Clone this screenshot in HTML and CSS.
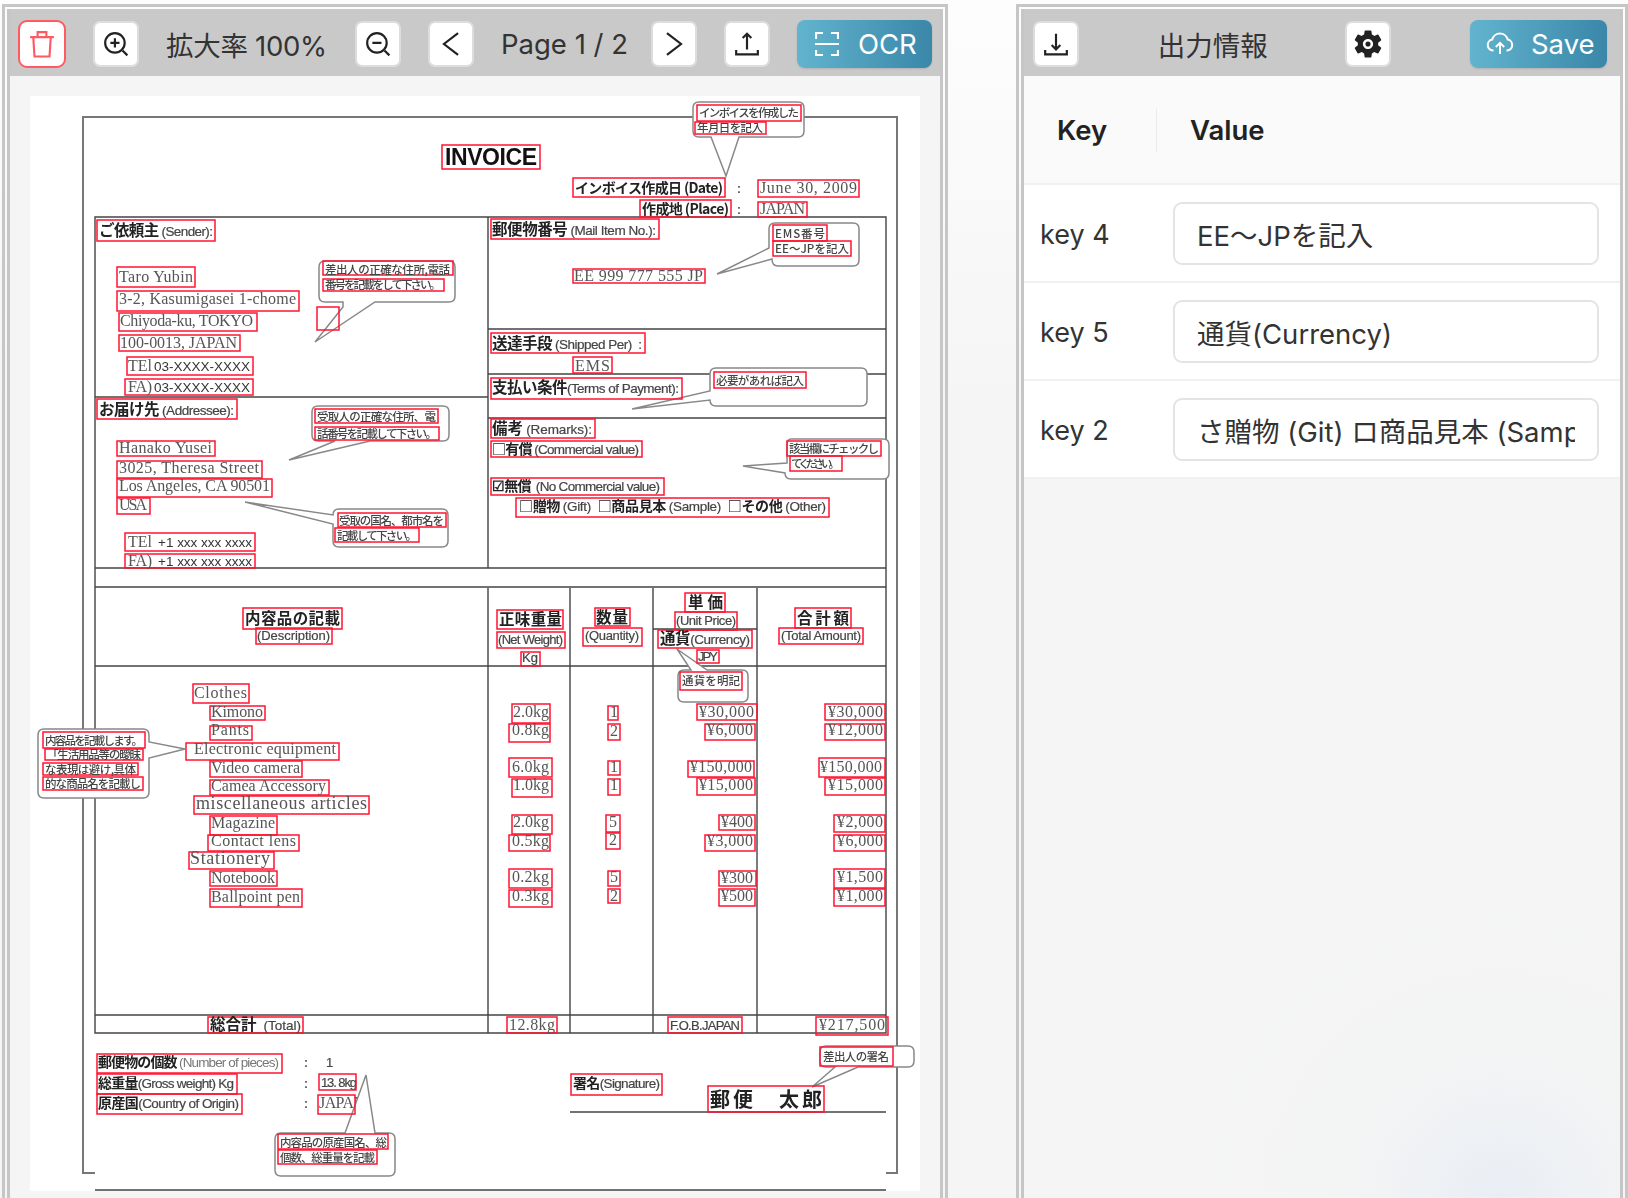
FILE: index.html
```html
<!DOCTYPE html>
<html lang="ja">
<head>
<meta charset="utf-8">
<title>OCR</title>
<link rel="stylesheet" href="styles.css">
</head>
<body>
<div class="app">

<!-- document side -->
<section class="panel panel-doc">
<div class="panel-in">
	<div class="toolbar toolbar-doc">
		<button class="btn btn-danger">
			<svg class="ico" viewBox="0 0 24 24"><path d="M2.500 6.500h19M8.500 6.500v-4h7v4M5 6.500l1 15.500h12l1-15.500"/></svg>
		</button>
		<button class="btn">
			<svg class="ico" viewBox="0 0 24 24"><circle cx="11" cy="11" r="9"/><path d="M18 18l4.500 4.500M11 6.800v8.400M6.800 11h8.400"/></svg>
		</button>
		<span class="bar-text bar-zoom">拡大率 100%</span>
		<button class="btn">
			<svg class="ico" viewBox="0 0 24 24"><circle cx="11" cy="11" r="9"/><path d="M18 18l4.500 4.500M6.800 11h8.400"/></svg>
		</button>
		<button class="btn">
			<svg class="ico" viewBox="0 0 24 24"><path d="M18.500 2L5.500 12l13 10"/></svg>
		</button>
		<span class="bar-text bar-page">Page 1 / 2</span>
		<button class="btn">
			<svg class="ico" viewBox="0 0 24 24"><path d="M5.500 2l13 10-13 10"/></svg>
		</button>
		<button class="btn">
			<svg class="ico" viewBox="0 0 24 24"><path d="M12 17V2.500M8 6.500l4-4 4 4M2 17.500v4h20v-4"/></svg>
		</button>
		<button class="btn-main btn-ocr">
			<svg class="ico ico-main" viewBox="0 0 24 24"><path d="M1 7V1h7M16 1h7v6M23 18v5h-7M8 23H1v-5M0 12h24"/></svg>
			<span>OCR</span>
		</button>
	</div>
	<div class="viewer">
		<div class="sheet">
<svg class="scan" viewBox="30 96 890 1095">
<g class="rules">
	<path class="thick" d="M95 1173H83V117H897V1173H886"/>
	<path d="M95 217H886V1033H95ZM488 217V568M488 588V1033M570 588V1033M653 588V1033M757 588V1033"/>
	<path d="M95 397H488M488 329H886M488 374H886M488 418H886M95 568H886M95 587H886M95 666H886M653 629H757M95 1015H886M95 1190H886M570 1112H886"/>
</g>
<g class="marks">
	<text class="en-s" x="321" y="1087" textLength="36">13. 8kg</text>
	<text class="ser" x="319" y="1108" textLength="46">JAPAN</text>
</g>
<g class="callouts">
	<path d="M699 102H798Q804 102 804 108V131Q804 137 798 137H739L726 176 711 137H699Q693 137 693 131V108Q693 102 699 102Z"/>
	<path d="M325 261H449Q455 261 455 267V296Q455 302 449 302H375L315 342 343 307V302H325Q319 302 319 296V267Q319 261 325 261Z"/>
	<path d="M318 406H443Q449 406 449 412V435Q449 441 443 441H370L289 460 335 441H318Q312 441 312 435V412Q312 406 318 406Z"/>
	<path d="M339 509H442Q448 509 448 515V541Q448 547 442 547H339Q333 547 333 541V524L245 502 333 515Q333 509 339 509Z"/>
	<path d="M775 223H853Q859 223 859 229V260Q859 266 853 266H778Q772 266 772 259L717 274 769 248V229Q769 223 775 223Z"/>
	<path d="M716 368H861Q867 368 867 374V400Q867 406 861 406H716Q710 406 710 400L632 409 710 391V374Q710 368 716 368Z"/>
	<path d="M791 439H883Q889 439 889 445V473Q889 479 883 479H791Q785 479 785 473L743 466 787 463V445Q787 439 791 439Z"/>
	<path d="M44 729H143Q149 729 149 735V742L185 749 149 758V792Q149 798 143 798H44Q38 798 38 792V735Q38 729 44 729Z"/>
	<path d="M684 670H691L677 649 707 670H742Q748 670 748 676V696Q748 702 742 702H684Q678 702 678 696V676Q678 670 684 670Z"/>
	<path d="M281 1133H345L366 1075 375 1133H389Q395 1133 395 1139V1170Q395 1176 389 1176H281Q275 1176 275 1170V1139Q275 1133 281 1133Z"/>
	<path d="M826 1046H908Q914 1046 914 1052V1061Q914 1067 908 1067H858L812 1087 835 1067H826Q820 1067 820 1061V1052Q820 1046 826 1046Z"/>
</g>
<g class="marks">
	<rect x="442" y="145" width="98" height="24"/><text class="b22" x="445" y="165" textLength="92">INVOICE</text>
	<rect x="573" y="178" width="152" height="19"/><text class="lab" x="575" y="193" textLength="148">インボイス作成日 (Date)</text>
	<text class="tiny" x="737" y="193">:</text>
	<rect x="758" y="180" width="101" height="17"/><text class="ser" x="760" y="193" textLength="97">June 30, 2009</text>
	<rect x="640" y="200" width="91" height="17"/><text class="lab" x="642" y="214" textLength="87">作成地 (Place)</text>
	<text class="tiny" x="737" y="214">:</text>
	<rect x="758" y="202" width="49" height="15"/><text class="ser" x="760" y="214" textLength="45">JAPAN</text>
	<rect x="697" y="105" width="104" height="16"/><text class="note" x="699" y="117" textLength="100">インボイスを作成した</text>
	<rect x="695" y="122" width="71" height="12"/><text class="note" x="697" y="132" textLength="66">年月日を記入</text>

	<rect x="97" y="220" width="118" height="21"/><text class="lab lab-l" x="99" y="236" textLength="114">ご依頼主 <tspan class="en">(Sender):</tspan></text>
	<rect x="117" y="267" width="78" height="20"/><text class="ser" x="119" y="282" textLength="74">Taro Yubin</text>
	<rect x="117" y="291" width="182" height="20"/><text class="ser" x="119" y="304" textLength="177">3-2, Kasumigasei 1-chome</text>
	<rect x="119" y="313" width="138" height="18"/><text class="ser" x="120" y="326" textLength="133">Chiyoda-ku, TOKYO</text>
	<rect x="119" y="335" width="121" height="16"/><text class="ser" x="120" y="348" textLength="117">100-0013, JAPAN</text>
	<rect x="127" y="357" width="126" height="18"/><text class="ser" x="128" y="371" textLength="24">TEl</text><text class="en-m" x="154" y="371" textLength="96">03-XXXX-XXXX</text>
	<rect x="125" y="379" width="128" height="16"/><text class="ser" x="128" y="392" textLength="24">FA)</text><text class="en-m" x="154" y="392" textLength="96">03-XXXX-XXXX</text>
	<rect x="323" y="261" width="130" height="14"/><text class="note" x="325" y="274" textLength="125">差出人の正確な住所,電話</text>
	<rect x="323" y="279" width="121" height="12"/><text class="note" x="325" y="289" textLength="116">番号を記載をして下さい。</text>
	<rect x="317" y="307" width="22" height="23"/>

	<rect x="97" y="399" width="140" height="20"/><text class="lab lab-l" x="99" y="415" textLength="135">お届け先 <tspan class="en">(Addressee):</tspan></text>
	<rect x="117" y="441" width="98" height="15"/><text class="ser" x="119" y="453" textLength="93">Hanako Yusei</text>
	<rect x="117" y="461" width="145" height="17"/><text class="ser" x="119" y="473" textLength="140">3025, Theresa Street</text>
	<rect x="117" y="479" width="155" height="18"/><text class="ser" x="119" y="491" textLength="151">Los Angeles, CA 90501</text>
	<rect x="117" y="498" width="33" height="16"/><text class="ser" x="119" y="510" textLength="28">USA</text>
	<rect x="125" y="533" width="130" height="18"/><text class="ser" x="128" y="547" textLength="24">TEl</text><text class="en-m" x="158" y="547" textLength="94">+1 xxx xxx xxxx</text>
	<rect x="125" y="554" width="130" height="14"/><text class="ser" x="128" y="566" textLength="24">FA)</text><text class="en-m" x="158" y="566" textLength="94">+1 xxx xxx xxxx</text>
	<rect x="315" y="409" width="123" height="14"/><text class="note" x="317" y="421" textLength="119">受取人の正確な住所、電</text>
	<rect x="315" y="427" width="124" height="13"/><text class="note" x="317" y="438" textLength="120">話番号を記載して下さい。</text>
	<rect x="338" y="513" width="108" height="14"/><text class="note" x="339" y="525" textLength="105">受取の国名、都市名を</text>
	<rect x="335" y="528" width="84" height="14"/><text class="note" x="337" y="540" textLength="80">記載して下さい。</text>

	<rect x="491" y="219" width="168" height="20"/><text class="lab lab-l" x="492" y="235" textLength="164">郵便物番号 <tspan class="en">(Mail Item No.):</tspan></text>
	<rect x="573" y="269" width="132" height="14"/><text class="ser" x="574" y="281" textLength="129">EE 999 777 555 JP</text>
	<rect x="773" y="225" width="54" height="16"/><text class="note" x="775" y="238" textLength="50">EMS番号</text>
	<rect x="773" y="241" width="78" height="15"/><text class="note" x="775" y="253" textLength="74">EE～JPを記入</text>
	<rect x="491" y="333" width="154" height="20"/><text class="lab lab-l" x="492" y="349" textLength="150">送達手段 <tspan class="en">(Shipped Per)  :</tspan></text>
	<rect x="573" y="357" width="39" height="16"/><text class="ser" x="575" y="371" textLength="35">EMS</text>
	<rect x="491" y="378" width="191" height="21"/><text class="lab lab-l" x="492" y="393" textLength="187">支払い条件<tspan class="en">(Terms of Payment):</tspan></text>
	<rect x="714" y="372" width="92" height="16"/><text class="note" x="716" y="385" textLength="88">必要があれば記入</text>
	<rect x="491" y="419" width="104" height="19"/><text class="lab lab-l" x="492" y="434" textLength="100">備考 <tspan class="en">(Remarks):</tspan></text>
	<rect x="491" y="441" width="151" height="16"/><text class="lab" x="492" y="454" textLength="147">□有償 <tspan class="en">(Commercial value)</tspan></text>
	<rect x="491" y="478" width="173" height="17"/><text class="lab" x="492" y="491" textLength="168">☑無償  <tspan class="en">(No Commercial value)</tspan></text>
	<rect x="787" y="441" width="94" height="15"/><text class="note" x="789" y="453" textLength="90">該当欄にチェックし</text>
	<rect x="790" y="456" width="52" height="15"/><text class="note" x="791" y="468" textLength="49">てください。</text>
	<rect x="516" y="498" width="313" height="19"/><text class="lab" x="519" y="511" textLength="307">□贈物 <tspan class="en">(Gift)  </tspan>□商品見本 <tspan class="en">(Sample)  </tspan>□その他 <tspan class="en">(Other)</tspan></text>

	<rect x="243" y="608" width="99" height="21"/><text class="lab lab-l" x="245" y="624" textLength="95">内容品の記載</text>
	<rect x="256" y="628" width="76" height="16"/><text class="en-s" x="257" y="640" textLength="73">(Description)</text>
	<rect x="497" y="610" width="66" height="19"/><text class="lab lab-l" x="499" y="625" textLength="63">正味重量</text>
	<rect x="497" y="632" width="68" height="16"/><text class="en-s" x="498" y="644" textLength="65">(Net Weight)</text>
	<rect x="521" y="652" width="19" height="14"/><text class="en-s" x="522" y="662" textLength="16">Kg</text>
	<rect x="595" y="608" width="35" height="18"/><text class="lab lab-l" x="596" y="623" textLength="32">数量</text>
	<rect x="583" y="628" width="59" height="18"/><text class="en-s" x="585" y="640" textLength="54">(Quantity)</text>
	<rect x="685" y="593" width="40" height="19"/><text class="lab lab-l" x="688" y="608" textLength="35">単価</text>
	<rect x="675" y="612" width="62" height="18"/><text class="en-s" x="676" y="625" textLength="60">(Unit Price)</text>
	<rect x="658" y="630" width="94" height="18"/><text class="lab lab-l" x="660" y="644" textLength="90">通貨<tspan class="en">(Currency)</tspan></text>
	<rect x="697" y="650" width="22" height="13"/><text class="en-s" x="698" y="661" textLength="20">JPY</text>
	<rect x="795" y="608" width="56" height="20"/><text class="lab lab-l" x="797" y="624" textLength="52">合計額</text>
	<rect x="779" y="628" width="84" height="16"/><text class="en-s" x="781" y="640" textLength="80">(Total Amount)</text>
	<rect x="680" y="672" width="62" height="18"/><text class="note" x="682" y="685" textLength="58">通貨を明記</text>

	<rect x="193" y="684" width="56" height="19"/><text class="ser" x="194" y="698" textLength="53">Clothes</text>
	<rect x="210" y="706" width="55" height="14"/><text class="ser" x="211" y="717" textLength="52">Kimono</text>
	<rect x="210" y="726" width="42" height="14"/><text class="ser" x="211" y="735" textLength="38">Pants</text>
	<rect x="186" y="743" width="153" height="17"/><text class="ser" x="194" y="754" textLength="142">Electronic equipment</text>
	<rect x="210" y="761" width="92" height="16"/><text class="ser" x="211" y="773" textLength="89">Video camera</text>
	<rect x="210" y="780" width="119" height="15"/><text class="ser" x="211" y="791" textLength="115">Camea Accessory</text>
	<rect x="194" y="796" width="175" height="18"/><text class="ser ser-l" x="196" y="809" textLength="171">miscellaneous articles</text>
	<rect x="210" y="816" width="67" height="19"/><text class="ser" x="211" y="828" textLength="64">Magazine</text>
	<rect x="208" y="835" width="91" height="16"/><text class="ser" x="211" y="846" textLength="85">Contact lens</text>
	<rect x="189" y="852" width="85" height="17"/><text class="ser ser-l" x="190" y="864" textLength="80">Stationery</text>
	<rect x="210" y="871" width="67" height="15"/><text class="ser" x="211" y="883" textLength="64">Notebook</text>
	<rect x="210" y="889" width="92" height="18"/><text class="ser" x="211" y="902" textLength="89">Ballpoint pen</text>
	<rect x="43" y="732" width="102" height="16"/><text class="note" x="45" y="745" textLength="98">内容品を記載します。</text>
	<rect x="45" y="749" width="98" height="11"/><text class="note" x="47" y="759" textLength="94">「生活用品等の曖昧</text>
	<rect x="43" y="763" width="95" height="12"/><text class="note" x="45" y="774" textLength="91">な表現は避け,具体</text>
	<rect x="43" y="777" width="100" height="13"/><text class="note" x="45" y="788" textLength="96">的な商品名を記載し</text>

	<rect x="512" y="704" width="38" height="19"/><text class="ser" x="513" y="717" textLength="36">2.0kg</text>
	<rect x="509" y="724" width="41" height="18"/><text class="ser" x="512" y="735" textLength="37">0.8kg</text>
	<rect x="509" y="758" width="43" height="19"/><text class="ser" x="512" y="772" textLength="37">6.0kg</text>
	<rect x="512" y="779" width="40" height="18"/><text class="ser" x="513" y="790" textLength="36">1.0kg</text>
	<rect x="512" y="815" width="40" height="19"/><text class="ser" x="513" y="827" textLength="36">2.0kg</text>
	<rect x="509" y="835" width="41" height="16"/><text class="ser" x="512" y="846" textLength="37">0.5kg</text>
	<rect x="509" y="869" width="43" height="19"/><text class="ser" x="512" y="882" textLength="37">0.2kg</text>
	<rect x="509" y="890" width="43" height="17"/><text class="ser" x="512" y="901" textLength="37">0.3kg</text>

	<rect x="608" y="706" width="10" height="14"/><text class="ser" x="610" y="717">1</text>
	<rect x="608" y="724" width="12" height="16"/><text class="ser" x="610" y="736">2</text>
	<rect x="608" y="761" width="12" height="14"/><text class="ser" x="610" y="772">1</text>
	<rect x="608" y="779" width="12" height="16"/><text class="ser" x="610" y="790">1</text>
	<rect x="606" y="815" width="14" height="17"/><text class="ser" x="609" y="827">5</text>
	<rect x="606" y="833" width="14" height="16"/><text class="ser" x="609" y="845">2</text>
	<rect x="608" y="871" width="12" height="15"/><text class="ser" x="610" y="882">5</text>
	<rect x="608" y="889" width="12" height="14"/><text class="ser" x="610" y="901">2</text>

	<rect x="697" y="704" width="60" height="16"/><text class="ser" x="699" y="717" textLength="55">¥30,000</text>
	<rect x="705" y="724" width="50" height="16"/><text class="ser" x="707" y="735" textLength="46">¥6,000</text>
	<rect x="688" y="761" width="66" height="16"/><text class="ser" x="690" y="772" textLength="62">¥150,000</text>
	<rect x="697" y="778" width="58" height="17"/><text class="ser" x="699" y="790" textLength="54">¥15,000</text>
	<rect x="719" y="815" width="36" height="15"/><text class="ser" x="721" y="827" textLength="32">¥400</text>
	<rect x="705" y="835" width="50" height="16"/><text class="ser" x="707" y="846" textLength="46">¥3,000</text>
	<rect x="719" y="871" width="37" height="15"/><text class="ser" x="721" y="883" textLength="32">¥300</text>
	<rect x="719" y="889" width="36" height="17"/><text class="ser" x="721" y="901" textLength="32">¥500</text>

	<rect x="825" y="704" width="60" height="16"/><text class="ser" x="828" y="717" textLength="55">¥30,000</text>
	<rect x="825" y="724" width="60" height="16"/><text class="ser" x="828" y="735" textLength="55">¥12,000</text>
	<rect x="819" y="758" width="66" height="19"/><text class="ser" x="820" y="772" textLength="62">¥150,000</text>
	<rect x="825" y="778" width="60" height="17"/><text class="ser" x="828" y="790" textLength="55">¥15,000</text>
	<rect x="834" y="815" width="51" height="17"/><text class="ser" x="837" y="827" textLength="46">¥2,000</text>
	<rect x="834" y="835" width="51" height="16"/><text class="ser" x="837" y="846" textLength="46">¥6,000</text>
	<rect x="834" y="869" width="51" height="19"/><text class="ser" x="837" y="882" textLength="46">¥1,500</text>
	<rect x="834" y="889" width="51" height="17"/><text class="ser" x="837" y="901" textLength="46">¥1,000</text>

	<rect x="208" y="1017" width="95" height="16"/><text class="lab lab-l" x="210" y="1030" textLength="91">総合計  <tspan class="en">(Total)</tspan></text>
	<rect x="507" y="1017" width="50" height="16"/><text class="ser" x="509" y="1030" textLength="46">12.8kg</text>
	<rect x="668" y="1017" width="74" height="16"/><text class="en-s" x="670" y="1030" textLength="70">F.O.B.JAPAN</text>
	<rect x="816" y="1017" width="72" height="18"/><text class="ser" x="819" y="1030" textLength="66">¥217,500</text>

	<rect x="97" y="1054" width="185" height="19"/><text class="lab" x="98" y="1067" textLength="181">郵便物の個数 <tspan class="en en-lt">(Number of pieces)</tspan></text>
	<rect x="97" y="1074" width="140" height="20"/><text class="lab" x="98" y="1088" textLength="136">総重量<tspan class="en">(Gross weight) Kg</tspan></text>
	<rect x="97" y="1094" width="145" height="20"/><text class="lab" x="98" y="1108" textLength="141">原産国<tspan class="en">(Country of Origin)</tspan></text>
	<text class="tiny" x="304" y="1067">:</text><text class="tiny" x="304" y="1088">:</text><text class="tiny" x="304" y="1108">:</text>
	<text class="en-s" x="326" y="1067">1</text>
	<rect x="319" y="1074" width="37" height="16"/>
	<rect x="318" y="1095" width="37" height="19"/>
	<rect x="278" y="1134" width="110" height="15"/><text class="note" x="280" y="1147" textLength="107">内容品の原産国名、総</text>
	<rect x="278" y="1150" width="99" height="14"/><text class="note" x="280" y="1162" textLength="95">個数、総重量を記載</text>

	<rect x="571" y="1074" width="91" height="21"/><text class="lab" x="573" y="1088" textLength="87">署名<tspan class="en">(Signature)</tspan></text>
	<rect x="820" y="1047" width="73" height="19"/><text class="note" x="823" y="1061" textLength="66">差出人の署名</text>
	<rect x="708" y="1086" width="116" height="26"/><text class="sign" x="710" y="1107" textLength="112">郵便　太郎</text>
</g>
</svg>
		</div>
	</div>
</div>
</section>

<!-- output side -->
<section class="panel panel-out">
<div class="panel-in">
	<div class="toolbar toolbar-out">
		<button class="btn">
			<svg class="ico" viewBox="0 0 24 24"><path d="M12 2.500V17M8 13l4 4 4-4M2 17.500v4h20v-4"/></svg>
		</button>
		<span class="bar-text bar-title">出力情報</span>
		<button class="btn">
			<svg class="ico-gear" viewBox="0 0 24 24"><path d="M19.140 12.940c.04-.3.06-.61.06-.94 0-.32-.02-.64-.07-.94l2.030-1.580a.49.49 0 0 0 .12-.61l-1.920-3.320a.488.488 0 0 0-.59-.22l-2.390.96c-.5-.38-1.030-.7-1.620-.94l-.36-2.540a.484.484 0 0 0-.48-.41h-3.840c-.24 0-.43.17-.47.41l-.36 2.540c-.59.24-1.130.57-1.620.94l-2.390-.96c-.22-.08-.47 0-.59.22L2.740 8.870c-.12.21-.08.47.12.61l2.030 1.580c-.05.3-.09.63-.09.94s.02.64.07.94l-2.030 1.580a.49.49 0 0 0-.12.61l1.920 3.320c.12.22.37.29.59.22l2.390-.96c.5.38 1.030.7 1.620.94l.36 2.540c.05.24.24.41.48.41h3.840c.24 0 .44-.17.47-.41l.36-2.540c.59-.24 1.130-.56 1.620-.94l2.390.96c.22.08.47 0 .59-.22l1.920-3.320c.12-.22.07-.47-.12-.61l-2.010-1.580zM12 15.600c-1.980 0-3.600-1.620-3.600-3.600s1.620-3.600 3.600-3.600 3.600 1.620 3.600 3.600-1.620 3.600-3.600 3.600z"/><circle cx="12" cy="12" r="1.800"/></svg>
		</button>
		<button class="btn-main btn-save">
			<svg class="ico ico-cloud" viewBox="0 0 28 24"><path d="M7.500 18.500H7a5.500 5.500 0 0 1-.8-10.900A8 8 0 0 1 21.700 7.600 5.500 5.500 0 0 1 21 18.500h-.5M14 22V11M9.800 15L14 10.800 18.200 15"/></svg>
			<span>Save</span>
		</button>
	</div>
	<div class="kv">
		<div class="kv-head">
			<div class="kv-h-key">Key</div>
			<div class="kv-h-val">Value</div>
		</div>
		<div class="kv-row">
			<div class="kv-key">key 4</div>
			<div class="field"><div class="field-text">EE～JPを記入</div></div>
		</div>
		<div class="kv-row">
			<div class="kv-key">key 5</div>
			<div class="field"><div class="field-text">通貨(Currency)</div></div>
		</div>
		<div class="kv-row">
			<div class="kv-key">key 2</div>
			<div class="field"><div class="field-text">さ贈物 (Git) ロ商品見本 (Sample)</div></div>
		</div>
	</div>
</div>
</section>

</div>
</body>
</html>
```
FILE: styles.css
```css
* {
	box-sizing: border-box;
}
html, body {
	margin: 0;
	height: 100%;
	overflow: hidden;
}
body {
	background: linear-gradient(180deg, #fdfdfd 0, #f5f5f5 400px);
	font-family: Inter, "Noto Sans CJK JP", sans-serif;
	color: #333;
}
.app {
	display: flex;
	gap: 68px;
	height: 1198px;
	padding: 4px 0 0 2px;
}

/* panels */
.panel {
	border: 3px solid #c6c6c6;
	border-bottom: 0;
	padding: 2px 2px 0;
}
.panel-doc {
	width: 946px;
}
.panel-out {
	width: 612px;
}
.panel-in {
	display: flex;
	flex-direction: column;
	height: 100%;
	border: solid #c6c6c6;
	border-width: 0 3px;
}

/* toolbar */
.toolbar {
	display: flex;
	align-items: center;
	justify-content: space-between;
	flex: none;
	height: 67px;
	padding-top: 3px;
	background: #c9c9c9;
}
.toolbar-doc {
	padding-left: 8px;
	padding-right: 8px;
}
.toolbar-out {
	padding-left: 9px;
	padding-right: 13px;
}
.bar-text {
	flex: none;
	font-size: 27.5px;
	white-space: nowrap;
}
.bar-zoom {
	width: 162px;
	letter-spacing: -.3px;
}
.bar-page {
	width: 123px;
}
.bar-title {
	width: 109px;
}
.btn {
	display: flex;
	align-items: center;
	justify-content: center;
	flex: none;
	width: 46px;
	height: 46px;
	padding: 0;
	background: #fff;
	border: 2px solid #dddddd;
	border-radius: 7px;
}
.btn-danger {
	width: 48px;
	height: 48px;
	border-color: #ff5a62;
	border-radius: 9px;
}
.btn-danger .ico {
	width: 30px;
	height: 30px;
	stroke: #ff5a62;
	stroke-width: 1.7;
}
.btn-main {
	display: flex;
	align-items: center;
	flex: none;
	height: 48px;
	border: 0;
	border-radius: 8px;
	background: linear-gradient(90deg, #62b4ce, #3a87a9);
	color: #fff;
	font-family: inherit;
	font-size: 27.5px;
	box-shadow: 0 1px 2px rgba(0, 0, 0, .12);
}
.btn-ocr {
	width: 135px;
	padding: 0 0 0 18px;
	gap: 19px;
}
.btn-save {
	width: 137px;
	padding: 0 0 0 16px;
	gap: 17px;
}
.ico {
	width: 26px;
	height: 26px;
	fill: none;
	stroke: #222;
	stroke-width: 2;
}
.ico-main {
	width: 24px;
	height: 24px;
	stroke: #fff;
	stroke-width: 2.2;
}
.ico-cloud {
	width: 28px;
	height: 24px;
	stroke: #fff;
}
.ico-gear {
	width: 34px;
	height: 34px;
	fill: #222;
}

/* document viewer */
.viewer {
	flex: 1;
	padding: 20px 20px 0;
	background: #f5f5f5;
	overflow: hidden;
}
.sheet {
	width: 890px;
	height: 1095px;
	background: #fff;
}
.scan {
	display: block;
	width: 890px;
	height: 1095px;
	overflow: visible;
}
.rules {
	fill: none;
	stroke: #444;
	stroke-width: 1.4;
	filter: blur(.35px);
}
.rules .thick {
	stroke: #777;
	stroke-width: 2;
}
.callouts {
	fill: #fff;
	stroke: #888;
	stroke-width: 1.5;
	filter: blur(.3px);
}
.marks rect {
	fill: none;
	stroke: #ff1530;
	stroke-width: 1.5;
}
.marks text {
	white-space: pre;
	filter: blur(.3px);
}
.b22 {
	font: 700 23px "Liberation Sans", sans-serif;
	fill: #111;
}
.ser {
	font: 400 16px "Liberation Serif", serif;
	fill: #555;
}
.ser-l {
	font-size: 18px;
}
.lab {
	font: 700 14px "Noto Sans CJK JP", sans-serif;
	fill: #222;
}
.lab-l {
	font-size: 15.5px;
}
.en {
	font: 400 13.5px "Liberation Sans", sans-serif;
	fill: #444;
	stroke: #444;
	stroke-width: .2;
}
.en-lt {
	fill: #777;
	stroke: none;
}
.en-s {
	font: 400 13px "Liberation Sans", sans-serif;
	fill: #444;
	stroke: #444;
	stroke-width: .2;
}
.en-m {
	font: 400 13.5px "Liberation Sans", sans-serif;
	fill: #333;
}
.note {
	font: 500 11.5px "Noto Sans CJK JP", sans-serif;
	fill: #444;
}
.tiny {
	font: 700 12px "Liberation Sans", sans-serif;
	fill: #555;
}
.sign {
	font: 700 20px "Noto Sans CJK JP", serif;
	fill: #222;
}

/* key/value list */
.kv {
	flex: 1;
	background: radial-gradient(ellipse 300px 290px at 476px 100%, #e9eef5, #f3f4f4 50%, #f5f5f5 100%);
}
.kv-head {
	display: flex;
	align-items: center;
	height: 109px;
	background: #fafafa;
	border-bottom: 2px solid #f1f1f1;
	font-size: 27.5px;
	font-weight: 600;
	color: #222;
}
.kv-h-key {
	width: 133px;
	padding-left: 33px;
	border-right: 1px solid #ececec;
	line-height: 44px;
}
.kv-h-val {
	padding-left: 33px;
}
.kv-row {
	display: flex;
	align-items: center;
	height: 98px;
	padding: 1px 21px 0 16px;
	background: #fff;
	border-bottom: 2px solid #f1f1f1;
}
.kv-key {
	flex: none;
	width: 133px;
	padding-top: 2px;
	font-size: 27px;
}
.field {
	display: flex;
	align-items: center;
	flex: 1;
	min-width: 0;
	height: 63px;
	padding: 0 22px;
	border: 2px solid #e4e4e4;
	border-radius: 9px;
	font-size: 27.5px;
}
.field-text {
	overflow: hidden;
	white-space: nowrap;
}
```
